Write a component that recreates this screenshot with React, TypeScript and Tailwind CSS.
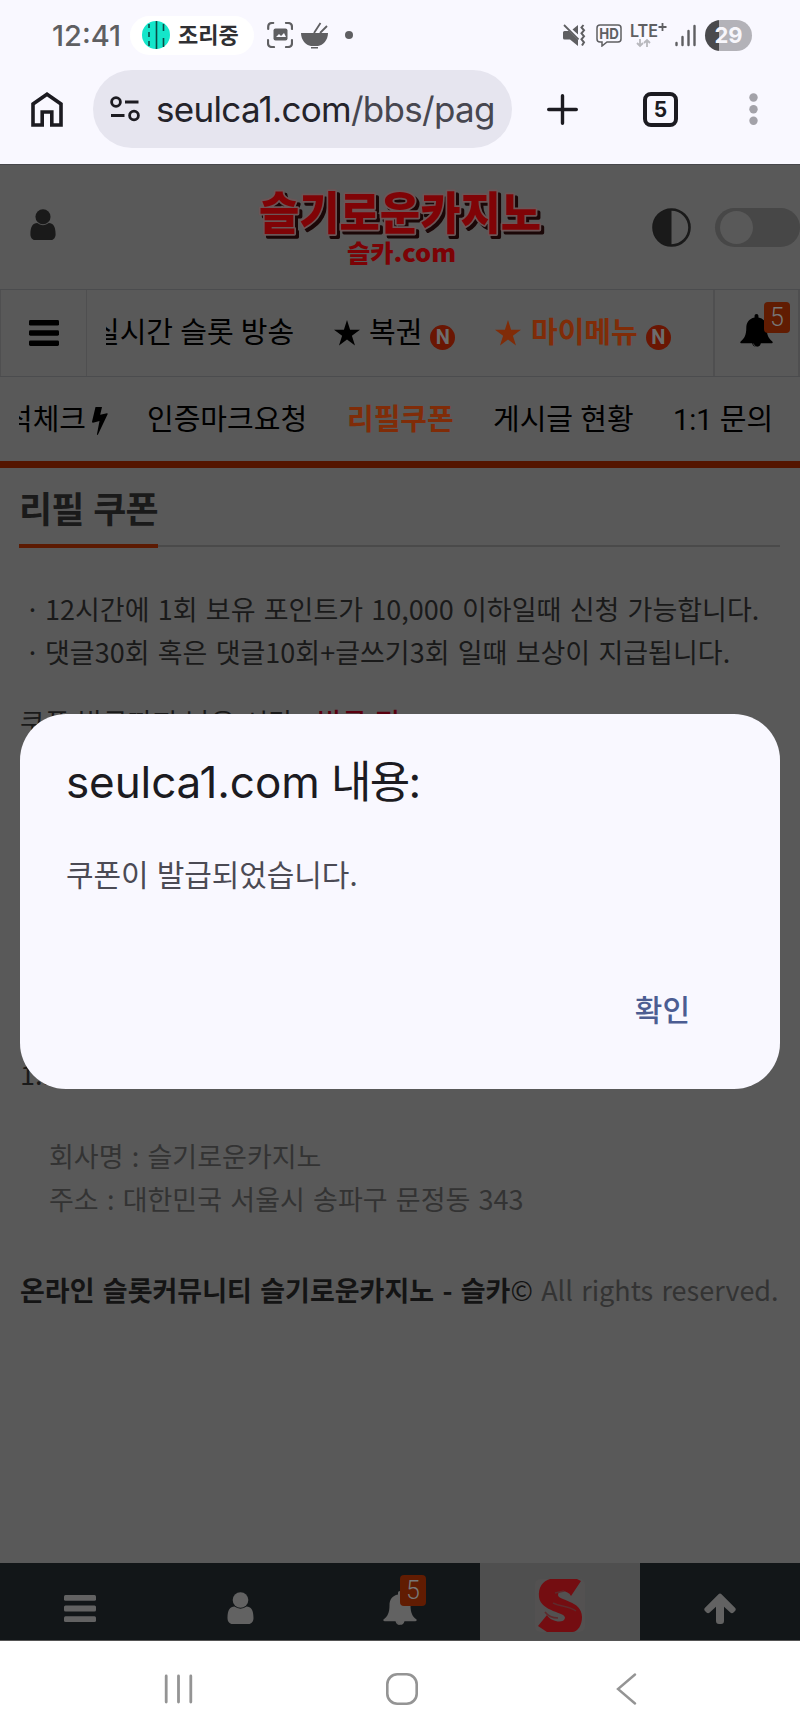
const kr = "font-['Noto_Sans_CJK_KR',sans-serif]";
const ui = "font-['Inter','Noto_Sans_CJK_KR',sans-serif]";
const nav = "font-['Roboto','Noto_Sans_CJK_KR',sans-serif]";

function UserIcon({ className }: { className: string }) {
  return (
    <svg className={className} viewBox="0 0 26 32" fill="currentColor">
      <circle cx="13" cy="8" r="7.8" />
      <path d="M7 14.5a9.4 9.4 0 0 0 12 0c4.500 0 7 3.500 7 11.500 0 3.500-2 6-5 6H5c-3 0-5-2.500-5-6 0-8 2.500-11.500 7-11.500z" />
    </svg>
  );
}

function BarsIcon({ className }: { className: string }) {
  return (
    <svg className={className} viewBox="0 0 32 27" fill="currentColor" preserveAspectRatio="none">
      <rect y="0" width="32" height="5.800" rx="1.500" />
      <rect y="10.600" width="32" height="5.800" rx="1.500" />
      <rect y="21.200" width="32" height="5.800" rx="1.500" />
    </svg>
  );
}

function BellIcon({ className }: { className: string }) {
  return (
    <svg className={className} viewBox="0 0 34 37" fill="currentColor">
      <path d="M17 1c1.300 0 2 .9 2 2v1.500c6 1.200 8.500 5.500 8.500 10.500 0 8 2 11.500 5.800 14.200.9.900.300 2-.9 2H21.500a4.600 4.600 0 0 1-9 0H1.600c-1.200 0-1.800-1.100-.9-2C4.500 26.500 6.500 23 6.500 15c0-5 2.500-9.300 8.500-10.500V3c0-1.100.7-2 2-2z" />
      <path d="M14 31.500c.2 1.900 1.300 3 3 3" fill="none" stroke="#595959" strokeWidth=".8" />
    </svg>
  );
}

function NewBadge() {
  return (
    <span className="mt-[9px] flex h-[25px] w-[25px] shrink-0 items-center justify-center rounded-full bg-[#6a1603] pb-px font-['Roboto',sans-serif] text-[20px] leading-none font-bold text-[#6d6d6d]">
      N
    </span>
  );
}

function CountBadge({ className }: { className: string }) {
  return (
    <span
      className={`absolute flex h-[31px] w-[26px] items-center justify-center rounded-[4px] bg-[#611c02] font-['Roboto',sans-serif] text-[25px] leading-none font-light text-[#777] ${className}`}
    >
      5
    </span>
  );
}

function StatusBar() {
  return (
    <div className={`flex h-[70px] items-center text-[#5f5f62] ${ui}`}>
      <span className="ml-[52px] w-[78px] text-[29px] leading-none font-medium">12:41</span>

      <div className="flex h-[39px] w-[124px] items-center rounded-full bg-white pl-3">
        <svg className="h-7 w-7" viewBox="0 0 28 28">
          <circle cx="14" cy="14" r="14" fill="#14e6ca" />
          <path d="M14.500 0v28M7 3v4M7 11v5M7 20v5M21.500 3v7M21.500 17v9" stroke="#0c4b45" strokeWidth="1.600" />
        </svg>
        <span className="ml-2 text-[22px] leading-none font-bold text-[#303033]">조리중</span>
      </div>

      <svg className="ml-[13px] h-[26px] w-[26px]" viewBox="0 0 26 26" fill="none" stroke="currentColor" strokeWidth="2.200" strokeLinecap="round">
        <path d="M1.200 7V5q0-4 4-4h1M19 1h2q4 0 4 4v2M25 18v3q0 4-4 4h-2M7 25H5q-4 0-4-4v-3" />
        <rect x="6.500" y="6.500" width="14" height="12" rx="2" fill="currentColor" stroke="none" />
        <path d="M9 15l3-3 2 2 3-3 2 4z" fill="#f9f8ff" stroke="none" />
      </svg>
      <svg className="ml-2 h-[27px] w-[27px]" viewBox="0 0 27 27" fill="currentColor">
        <path d="M0 11h27c0 7-5 12.500-10 13h-7C5 23.500 0 18 0 11zM10 25h7v1.500h-7z" />
        <path d="M13 11L19.500 1M19 11l7-7" stroke="currentColor" strokeWidth="1.800" />
      </svg>
      <span className="ml-[17px] h-2 w-2 rounded-full bg-[#5f5f62]" />

      <svg className="ml-[210px] h-[23px] w-[23px]" viewBox="0 0 23 23" fill="none">
        <path d="M0 8.500q0-1.500 1.500-1.500H6L15 16v6L7 15.500H1.500Q0 15.500 0 14zM9.500 5.500L15 1v9.500z" fill="currentColor" />
        <path d="M1 1l14.500 14.500" stroke="currentColor" strokeWidth="1.800" />
        <path d="M20.500 1l-2 2.500 2.500 2.800-2.500 3 2.500 3-2.500 3 2.500 3-2 3.200" stroke="currentColor" strokeWidth="2" />
      </svg>
      <svg className="ml-[10px] h-[23px] w-[26px]" viewBox="0 0 26 23">
        <path d="M4 1h18q3 0 3 3v11q0 3-3 3H11l-5 4v-4H4q-3 0-3-3V4q0-3 3-3z" fill="none" stroke="currentColor" strokeWidth="1.500" />
        <text x="3.300" y="14.800" fontSize="14.500" fontWeight="700" fill="currentColor" textLength="19.500" lengthAdjust="spacingAndGlyphs">HD</text>
      </svg>
      <svg className="ml-2 h-[27px] w-[38px]" viewBox="0 0 38 27">
        <text x="0" y="15" fontSize="17" fontWeight="600" fill="currentColor" textLength="28" lengthAdjust="spacingAndGlyphs">LTE</text>
        <path d="M32.500 1v8M28.500 5h8" stroke="currentColor" strokeWidth="1.800" />
        <path d="M10 17v7M7 21l3 3 3-3M17 25v-7M14 21l3-3 3 3" fill="none" stroke="#b8b8bd" strokeWidth="1.800" />
      </svg>
      <svg className="ml-[7px] h-[23px] w-[21px]" viewBox="0 0 21 23" stroke="currentColor" strokeWidth="2.400" strokeLinecap="round">
        <path d="M1.500 19v2M7.500 13v8M13.500 7v14M19.500 2v19" />
      </svg>
      <div className="ml-[9px] flex h-[31px] w-[47px] items-center justify-center rounded-full bg-[linear-gradient(90deg,#4a4a4d_14px,#b3b2b8_14px)] text-[22px] leading-none font-bold text-[#f7f6fb]">
        29
      </div>
    </div>
  );
}

function BrowserBar() {
  return (
    <div className={`flex h-[95px] border-b border-[#47474b] ${ui}`}>
      <svg className="mt-[22px] ml-[31px] h-[35px] w-8 shrink-0" viewBox="0 0 32 35" fill="none" stroke="#1c1b21" strokeWidth="3.600">
        <path d="M2 33V12L16 2.200 30 12v21h-9.200V20h-9.600v13z" />
      </svg>

      <div className="ml-[30px] flex h-[78px] w-[419px] shrink-0 items-center rounded-full bg-[#e6e5ef]">
        <svg className="ml-[17px] h-[26px] w-[30px] shrink-0" viewBox="0 0 30 26" fill="none" stroke="#1c1b21" strokeWidth="2.800">
          <circle cx="6" cy="6" r="4.400" />
          <circle cx="24" cy="19.500" r="4.400" />
          <path d="M15 6h13.500M1 19.500h13.500" />
        </svg>
        <span className="ml-[16px] text-[35px] leading-none tracking-[-0.700px] text-[#474750]">
          <span className="text-[#24232a]">seulca1.com</span>/bbs/pag
        </span>
      </div>

      <svg className="mt-[24px] ml-[35px] h-[31px] w-[31px] shrink-0" viewBox="0 0 31 31" stroke="#1c1b21" strokeWidth="3.400" strokeLinecap="round">
        <path d="M15.500 1.700v27.600M1.700 15.500h27.600" />
      </svg>
      <div className="mt-[22px] ml-[65px] flex h-[35px] w-[35px] shrink-0 items-center justify-center rounded-[8px] border-4 border-[#1c1b21] text-[21px] leading-none font-bold text-[#1c1b21]">
        5
      </div>
      <svg className="mt-[23px] ml-[71px] h-8 w-[9px] shrink-0" viewBox="0 0 9 32" fill="#a3a2a9">
        <circle cx="4.500" cy="4.500" r="4.200" />
        <circle cx="4.500" cy="16.200" r="4.200" />
        <circle cx="4.500" cy="27.800" r="4.200" />
      </svg>
    </div>
  );
}

function SiteHeader() {
  return (
    <header className="flex h-[124px] text-[#1a1a1a]">
      <UserIcon className="mt-[44px] ml-[30px] h-[31px] w-[26px] shrink-0" />

      <svg className="mt-[4px] ml-[200px] h-[108px] w-[292px] shrink-0" viewBox="0 0 292 108" fontFamily="'Noto Sans CJK KR', sans-serif" fontWeight="900">
        <text
          x="3"
          y="61"
          fontSize="45"
          textLength="282"
          lengthAdjust="spacingAndGlyphs"
          fill="#800306"
          stroke="#6b5556"
          strokeWidth="3.500"
          strokeLinejoin="round"
          paintOrder="stroke"
          className="drop-shadow-[3px_3px_0_#1a0707]"
        >
          슬기로운카지노
        </text>
        <text x="91" y="93" fontSize="24" textLength="109" lengthAdjust="spacingAndGlyphs" fill="#7c0205">슬카.com</text>
      </svg>

      <svg className="mt-[43px] ml-[104px] h-[39px] w-[39px] shrink-0" viewBox="0 0 39 39">
        <circle cx="19.500" cy="19.500" r="18" fill="none" stroke="currentColor" strokeWidth="2.600" />
        <path d="M19.500 1v37a18.500 18.500 0 0 1 0-37z" fill="currentColor" />
      </svg>
      <div className="mt-[43px] ml-[24px] h-[39px] w-[85px] shrink-0 rounded-full bg-[#474747] p-[3px] pl-[5px]">
        <span className="block h-[33px] w-[33px] rounded-full bg-[#595959]" />
      </div>
    </header>
  );
}

function Star() {
  return (
    <svg className="h-[26px] w-[26px] shrink-0" viewBox="0 0 26 26" fill="currentColor">
      <path d="M13 0l3.100 9.700H26l-8.100 6 3.100 9.800-8-6.100-8 6.100 3.100-9.800L0 9.700h9.900z" />
    </svg>
  );
}

function MainMenu() {
  return (
    <nav className={`flex h-[88px] border-y border-[#4b4c4e] text-[29px] leading-none text-black ${nav}`}>
      <div className="flex w-[87px] shrink-0 items-center justify-center border-x border-[#4f4f50]">
        <BarsIcon className="h-[26px] w-[30px]" />
      </div>
      <div className="ml-[19px] flex w-[588px] items-center overflow-hidden whitespace-nowrap">
        <span className="-ml-[13px] w-[241px] shrink-0">실시간 슬롯 방송</span>
        <span className="flex w-[161px] shrink-0 items-center">
          <Star />
          <span className="mr-[8px] ml-[9px]">복권</span>
          <NewBadge />
        </span>
        <span className="flex shrink-0 items-center font-bold text-[#802c08]">
          <Star />
          <span className="mr-[8px] ml-[10px]">마이메뉴</span>
          <NewBadge />
        </span>
      </div>
      <div className="relative ml-[19px] w-[87px] shrink-0 border-x-2 border-[#4f4f50]">
        <BellIcon className="mt-[23px] ml-[25px] h-[36px] w-[33px]" />
        <CountBadge className="top-[12px] left-[49px]" />
      </div>
    </nav>
  );
}

function SubMenu() {
  return (
    <nav className={`flex h-[91px] border-b-[7px] border-[#541500] px-[19px] pt-[3px] text-[29px] leading-none text-black ${nav}`}>
      <div className="flex items-center overflow-hidden whitespace-nowrap">
        <span className="-ml-[13px] w-[86px] shrink-0">석체크</span>
        <svg className="mt-[1px] h-[28px] w-[16px] shrink-0" viewBox="0 0 16 28" fill="currentColor">
          <path d="M3.500 0H10L8.200 7.800 15 6.200q1 0 .6 1L6 27.500q-1.200 1-1-.5L7.500 14 1 15.800q-1 0-1-1z" />
        </svg>
        <span className="ml-[39px] w-[200px] shrink-0">인증마크요청</span>
        <span className="w-[146px] shrink-0 font-bold text-[#802c08]">리필쿠폰</span>
        <span className="w-[180px] shrink-0">게시글 현황</span>
        <span className="shrink-0">1:1 문의</span>
      </div>
    </nav>
  );
}

function PageBody() {
  return (
    <main className={`h-[1095px] px-5 text-[27px] leading-[43px] whitespace-nowrap text-[#1a1a1a] [word-spacing:2.2px] ${kr}`}>
      <div className="flex h-20">
        <h1 className="-ml-px h-20 w-[139px] shrink-0 border-b-4 border-[#5c1a02] pt-[12px] text-[36px] leading-[54px] font-bold tracking-[-0.8px]">
          리필 쿠폰
        </h1>
        <div className="mb-px grow border-b-2 border-[#4a4a4a]" />
      </div>

      <ul className="mt-[39px]">
        <li className="flex"><span className="w-[25px] pl-[5px]">·</span>12시간에 1회 보유 포인트가 10,000 이하일때 신청 가능합니다.</li>
        <li className="flex"><span className="w-[25px] pl-[5px]">·</span>댓글30회 혹은 댓글10회+글쓰기3회 일때 보상이 지급됩니다.</li>
      </ul>

      <p className="mt-[27px]">
        쿠폰 발급까지 남은 시간 : <span className="font-medium text-[#5a0010]">발급 전</span>
      </p>

      <p className="mt-[309px]">1...</p>

      <div className="mt-[39px] pl-[29px] text-[#333]">
        <p>회사명 : 슬기로운카지노</p>
        <p>주소 : 대한민국 서울시 송파구 문정동 343</p>
      </div>

      <p className="mt-[48px] text-[#333]">
        <b className="text-[#141414]">온라인 슬롯커뮤니티 슬기로운카지노 - 슬카</b>
        <span className="text-[#141414]">©</span> All rights reserved.
      </p>
    </main>
  );
}

function TabBar() {
  return (
    <footer className="flex h-[78px] border-b border-[#555] bg-[#121618] text-[#626262]">
      <div className="flex w-[160px] justify-center pt-[32px]">
        <BarsIcon className="h-[27px] w-8" />
      </div>
      <div className="flex w-[160px] justify-center pt-[29px]">
        <UserIcon className="h-[32px] w-[27px]" />
      </div>
      <div className="relative flex w-[160px] justify-center pt-[27px]">
        <BellIcon className="h-[37px] w-[34px]" />
        <CountBadge className="top-[12px] left-[80px]" />
      </div>
      <div className="flex w-[160px] justify-center bg-[#4f4f4f] pt-[16px]">
        <svg className="h-[53px] w-[50px]" viewBox="0 0 50 53">
          <rect width="50" height="53" rx="5" fill="#535151" />
          <path d="M46 2L36 17C33 11 23 11 23 16c0 6 24 5 24 22 0 8-4 15-10 15H12L3 47l9-11c4 7 17 9 18 3 1-6-24-6-26-21C3 8 8 2 15 0h27z" fill="#740d11" />
          <path d="M18 24c8 4 16 3 23 8M10 33c3 4 8 6 13 6M20 14l9-2" stroke="#5f2a2c" strokeWidth="1.500" fill="none" />
        </svg>
      </div>
      <div className="flex w-[160px] justify-center pt-[30px]">
        <svg className="h-[32px] w-[32px]" viewBox="0 0 32 32" fill="currentColor">
          <path d="M14.500 1.200q1.500-1.500 3 0L31 14.800q1.500 1.600 0 3.200l-1.500 1.600q-1.600 1.500-3.200 0L20 13.800V28q0 3-3 3h-2q-3 0-3-3V13.800l-6.300 5.800q-1.600 1.500-3.200 0L1 18q-1.500-1.600 0-3.200z" />
        </svg>
      </div>
    </footer>
  );
}

function SystemNav() {
  return (
    <div className="flex h-[93px] bg-white pt-[32px]">
      <svg className="ml-[164px] h-8 w-[30px]" viewBox="0 0 30 32" stroke="#949494" strokeWidth="2.800" strokeLinecap="round">
        <path d="M2.200 3v26M14.500 3v26M26.800 3v26" />
      </svg>
      <svg className="ml-[192px] h-[32px] w-[32px]" viewBox="0 0 32 32" fill="none" stroke="#949494" strokeWidth="2.600">
        <rect x="1.300" y="1.300" width="29.400" height="29.400" rx="10" />
      </svg>
      <svg className="ml-[198px] h-[32px] w-[21px]" viewBox="0 0 21 32" fill="none" stroke="#949494" strokeWidth="2.400" strokeLinecap="round">
        <path d="M19 1.500L2 16l17 14.500" />
      </svg>
    </div>
  );
}

function AlertDialog() {
  return (
    <div
      role="alertdialog"
      className={`absolute top-[714px] left-5 flex h-[375px] w-[760px] flex-col rounded-[46px] bg-[#f9f8ff] px-[46px] ${ui}`}
    >
      <h2 className="mt-[38px] text-[44px] leading-[60px] tracking-[-0.100px] text-[#1c1b21]">
        seulca1.com <span className="-ml-[1px] tracking-[-1.700px]">내용:</span>
      </h2>
      <p className="mt-[42px] text-[30px] leading-[42px] tracking-[-0.1px] text-[#4b4a54]">쿠폰이 발급되었습니다.</p>
      <button className="mt-[93px] mr-[44px] self-end text-[30px] leading-[42px] font-medium text-[#4c5d92]">확인</button>
    </div>
  );
}

export default function App() {
  return (
    <div className="relative h-[1734px] w-[800px] overflow-hidden bg-[#f9f8ff]">
      <StatusBar />
      <BrowserBar />
      <div className="bg-[#595959]">
        <SiteHeader />
        <MainMenu />
        <SubMenu />
        <PageBody />
        <TabBar />
      </div>
      <SystemNav />
      <AlertDialog />
    </div>
  );
}
